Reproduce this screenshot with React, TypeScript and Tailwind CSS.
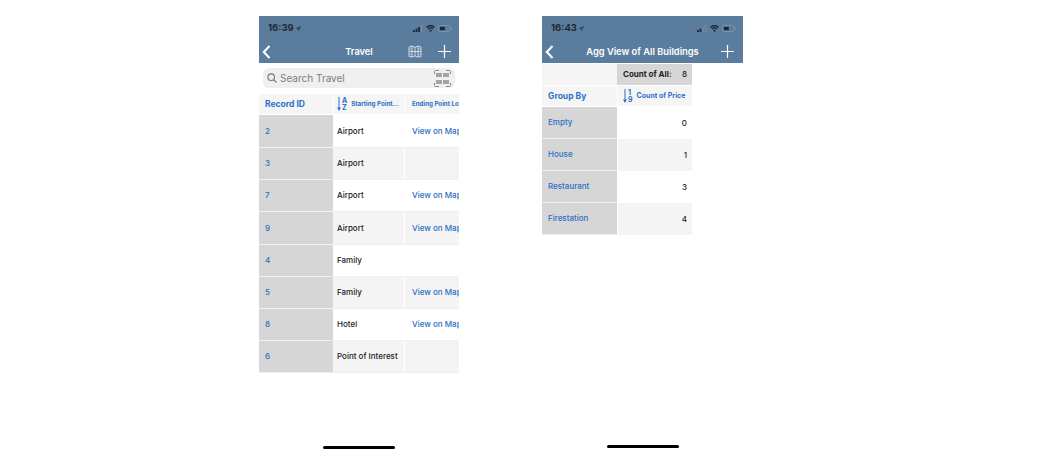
import React from "react";

const font = { fontFamily: 'Inter, "Liberation Sans", Arial, sans-serif' };
const blue = "text-[#2b6fc6]";

function Status({ time, weak }: { time: string; weak?: boolean }) {
  return (
    <div className="h-[24px] pl-[9px] pr-[7px] flex items-center justify-between text-[#232a33]">
      <div className="flex items-center gap-[2px] text-[9.5px] font-bold leading-none">
        {time}
        <svg width="5" height="5" viewBox="0 0 10 10"><path d="M9 1 1 5h4v4z" fill="none" stroke="#232a33" strokeWidth="1.3" /></svg>
      </div>
      <div className="flex items-center gap-[3px]">
        <svg width="10" height="7" viewBox="0 0 10 7">
          <rect x="0" y="5" width="1.8" height="2" fill="#1f2630" />
          <rect x="2.600" y="3.600" width="1.800" height="3.400" fill="#1f2630" />
          <rect x="5.200" y="2" width="1.800" height="5" fill={weak ? "#6f88a3" : "#1f2630"} />
          <rect x="7.800" y="0" width="1.800" height="7" fill="#6f88a3" />
        </svg>
        <svg width="9" height="7" viewBox="0 0 18 14">
          <path d="M1 5c5-5 11-5 16 0M4 8c3-3 7-3 10 0" fill="none" stroke="#1f2630" strokeWidth="2.800" />
          <path d="M9 14 6 10.500c2-1.500 4-1.500 6 0z" fill="#1f2630" />
        </svg>
        <svg width="14" height="7" viewBox="0 0 14 7">
          <rect x="0.500" y="0.500" width="11.500" height="6" rx="1.800" fill="none" stroke="#7d93aa" />
          <rect x="1.800" y="1.800" width="5" height="3.400" fill="#1f2630" />
          <rect x="12.800" y="2.300" width="1" height="2.400" fill="#7d93aa" />
        </svg>
      </div>
    </div>
  );
}

function Back() {
  return (
    <svg width="9" height="14" viewBox="0 0 9 14" className="ml-[3px]">
      <path d="M7.500 1 1.800 7l5.700 6" fill="none" stroke="#fff" strokeWidth="2.100" />
    </svg>
  );
}

function Plus() {
  return (
    <svg width="13" height="13" viewBox="0 0 13 13">
      <path d="M6.500 0v13M0 6.500h13" stroke="#fff" strokeWidth="1.200" />
    </svg>
  );
}

function MapIcon() {
  return (
    <svg width="14" height="13" viewBox="0 0 14 13" fill="none" stroke="#e6edf3" strokeWidth="0.800">
      <path d="M1 2 4 1l3 1.500L10 1l3 1v9.500L10 12l-3-1-3 1-3-.5z" />
      <path d="M4 1v11M7 2.500V11M10 1v11M1 6.500h12" />
      <path d="M1 4.500 4 3.500M10 3.500l3 1M1 9l3 .5M10 9.500l3-.5" strokeWidth="0.500" />
    </svg>
  );
}

function Barcode() {
  return (
    <svg width="17" height="17" viewBox="0 0 17 17" fill="none">
      <path d="M.5 4V1.500a1 1 0 0 1 1-1H5M12 .5h3.500a1 1 0 0 1 1 1V4M.5 13v2.500a1 1 0 0 0 1 1H5M12 16.500h3.500a1 1 0 0 0 1-1V13" stroke="#8a8a8a" />
      <path d="M3 3v4M5 3v4M7 3v4M10 3v4M12 3v4M14 3v4M3 10v4M5 10v4M7 10v4M10 10v4M12 10v4M14 10v4" stroke="#666" strokeWidth="1.100" />
    </svg>
  );
}

function SortAZ({ top, bottom }: { top: string; bottom: string }) {
  return (
    <div className="flex items-center gap-[1px] text-[#2b6fc6]">
      <svg width="4" height="14" viewBox="0 0 4 14">
        <path d="M2 0v11" fill="none" stroke="#2b6fc6" strokeWidth="1" />
        <path d="M0 10.500 2 14l2-3.500z" fill="#2b6fc6" />
      </svg>
      <div className="flex flex-col text-[7px] leading-[7px] font-bold">
        <span>{top}</span>
        <span>{bottom}</span>
      </div>
    </div>
  );
}

const travel = [
  ["2", "Airport", true, "h-[33px]"],
  ["3", "Airport", false, "h-[32px]"],
  ["7", "Airport", true, "h-[32px]"],
  ["9", "Airport", true, "h-[33px]"],
  ["4", "Family", false, "h-[32px]"],
  ["5", "Family", true, "h-[32px]"],
  ["8", "Hotel", true, "h-[32px]"],
  ["6", "Point of Interest", false, "h-[32px]"],
] as const;

const agg = [
  ["Empty", "0", "h-[32px]"],
  ["House", "1", "h-[32px]"],
  ["Restaurant", "3", "h-[32px]"],
  ["Firestation", "4", "h-[32px]"],
] as const;

export default function App() {
  return (
    <div style={font} className="w-[1048px] h-[469px] bg-white flex pl-[259px] gap-[83px] overflow-hidden">
      <div className="w-[200px] flex flex-col pt-[16px]">
        <div className="h-[47px] bg-[#5a7d9e]">
          <Status time="16:39" />
          <div className="h-[23px] flex items-center relative">
            <Back />
            <div className="absolute inset-x-0 text-center text-white text-[9.300px] font-semibold">Travel</div>
            <div className="ml-auto flex items-center gap-[16px] pr-[8px]">
              <MapIcon />
              <Plus />
            </div>
          </div>
        </div>
        <div className="mx-[4px] mt-[5px] h-[20px] rounded-[6px] bg-[#efeff0] flex items-center pl-[4px] pr-[4px] gap-[3px]">
          <svg width="10" height="10" viewBox="0 0 10 10" fill="none" stroke="#777" strokeWidth="1.100">
            <circle cx="4.200" cy="4.200" r="3.300" />
            <path d="M6.700 6.700 9.500 9.500" />
          </svg>
          <span className="text-[10px] text-[#7d7d80]">Search Travel</span>
          <div className="ml-auto"><Barcode /></div>
        </div>
        <div className="mt-[6px] h-[20px] flex bg-[#f5f5f5] mb-[1px]">
          <div className={`w-[74px] flex items-center pl-[6px] text-[8.500px] font-bold ${blue}`}>Record ID</div>
          <div className="w-[72px] flex items-center pl-[3px] gap-[4px] border-l border-r border-white">
            <SortAZ top="A" bottom="Z" />
            <span className={`text-[6.200px] font-bold whitespace-nowrap ${blue}`}>Starting Point...</span>
          </div>
          <div className={`flex-1 min-w-0 overflow-hidden flex items-center pl-[7px] text-[6.200px] font-bold whitespace-nowrap ${blue}`}>Ending Point Location</div>
        </div>
        {travel.map(([id, place, map, h], i) => (
          <div key={id} className={`flex ${h} border-b border-[#f0f0f0] ${i % 2 ? "bg-[#f4f4f4]" : "bg-white"}`}>
            <div className={`w-[74px] bg-[#d6d6d6] flex items-center pl-[6px] pb-[1px] text-[8px] font-medium ${blue}`}>{id}</div>
            <div className="w-[72px] flex items-center pl-[4px] pb-[1px] text-[8px] font-medium text-[#222] whitespace-nowrap border-r border-white">{place}</div>
            <div className={`flex-1 min-w-0 overflow-hidden flex items-center pl-[7px] pb-[1px] text-[8px] font-medium whitespace-nowrap ${blue}`}>{map ? "View on Map" : ""}</div>
          </div>
        ))}
        <div className="mt-[73px] mx-auto w-[72px] h-[2.500px] rounded-full bg-black" />
      </div>

      <div className="w-[201px] flex flex-col pt-[16px]">
        <div className="h-[47px] bg-[#5a7d9e]">
          <Status time="16:43" weak />
          <div className="h-[23px] flex items-center relative">
            <Back />
            <div className="absolute inset-x-0 text-center text-white text-[9.300px] font-semibold">Agg View of All Buildings</div>
            <div className="ml-auto pr-[9px]"><Plus /></div>
          </div>
        </div>
        <div className="w-[150px] flex h-[21px] bg-[#f5f5f5] mt-[1px]">
          <div className="w-[75px]" />
          <div className="flex-1 bg-[#d6d6d6] flex items-center justify-between pl-[6px] pr-[5px] pb-[1px] text-[8px] font-medium text-[#222]">
            <span className="font-bold">Count of All:</span>
            <span>8</span>
          </div>
        </div>
        <div className="w-[150px] flex h-[21px] bg-[#f5f5f5] mb-[1px] border-t border-white">
          <div className={`w-[75px] flex items-center pl-[6px] text-[8.500px] font-bold ${blue}`}>Group By</div>
          <div className="flex-1 flex items-center pl-[5px] gap-[4px] border-l border-white">
            <SortAZ top="1" bottom="9" />
            <span className={`text-[7px] font-bold whitespace-nowrap ${blue}`}>Count of Price</span>
          </div>
        </div>
        {agg.map(([name, n, h], i) => (
          <div key={name} className={`w-[150px] flex ${h} ${i % 2 ? "bg-[#f4f4f4]" : "bg-white"}`}>
            <div className={`w-[75px] bg-[#d6d6d6] border-b border-[#eeeeee] flex items-center pl-[6px] pb-[1px] text-[8px] font-medium ${blue}`}>{name}</div>
            <div className="flex-1 flex items-center justify-end pr-[5px] pb-[1px] text-[8px] font-medium text-[#222] border-l border-white">{n}</div>
          </div>
        ))}
        <div className="mt-[210px] mx-auto w-[72px] h-[2.500px] rounded-full bg-black" />
      </div>
    </div>
  );
}
